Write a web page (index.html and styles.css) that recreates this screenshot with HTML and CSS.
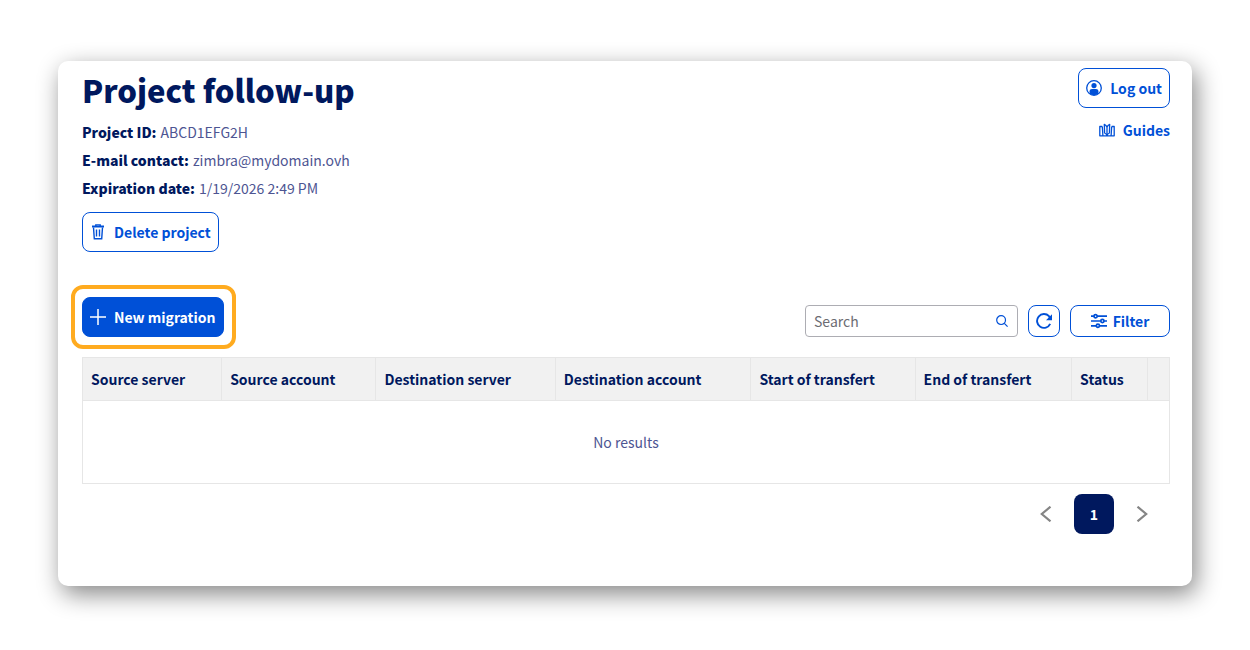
FILE: index.html
```html
<!DOCTYPE html>
<html lang="en">
<head>
<meta charset="utf-8">
<meta name="viewport" content="width=device-width, initial-scale=1">
<title>Project follow-up</title>
<link rel="stylesheet" href="styles.css">
</head>
<body>
<main class="card">
  <header class="top">
    <div class="project">
      <h1 class="title">Project follow-up</h1>
      <dl class="facts">
        <div class="fact"><dt>Project ID:</dt> <dd>ABCD1EFG2H</dd></div>
        <div class="fact"><dt>E-mail contact:</dt> <dd>zimbra@mydomain.ovh</dd></div>
        <div class="fact"><dt>Expiration date:</dt> <dd>1/19/2026 2:49 PM</dd></div>
      </dl>
      <button type="button" class="btn">
        <svg class="icon" viewBox="0 0 16 16" fill="none" stroke="currentColor" stroke-width="1.400"><path d="M2 2.500h12" stroke-width="2"/><path d="M5.800 2V.9h4.400V2M3.500 3.500l.8 11.300h7.400l.8-11.300M6.500 5.500v7M9.500 5.500v7"/></svg>
        <span>Delete project</span>
      </button>
    </div>
    <div class="account">
      <button type="button" class="btn">
        <svg class="icon" viewBox="0 0 16 16"><circle cx="8" cy="8" r="7.300" fill="none" stroke="currentColor" stroke-width="1.300"/><circle cx="8" cy="5.600" r="2.600" fill="currentColor"/><path fill="currentColor" d="M3.600 13.400v-2.100C3.600 9.900 4.700 9 6 9h4c1.300 0 2.400.9 2.400 2.300v2.100C11.200 14.500 9.700 15 8 15s-3.200-.5-4.400-1.600z"/></svg>
        <span>Log out</span>
      </button>
      <a class="guides" href="#guides">
        <svg class="icon" viewBox="0 0 16 16" fill="none" stroke="currentColor" stroke-width="1.300" stroke-linejoin="round"><path d="M3.300 4.500H.8v9.300h14.400V4.500h-2.500M8 13.600V5.300M8 5.300C7.500 3.800 6.600 2.800 5.300 2.300l.3 8.700C6.800 11.500 7.500 12.300 8 13.600 8.500 12.300 9.200 11.500 10.400 11l.3-8.700C9.400 2.800 8.500 3.800 8 5.300M3.300 4.500l.6 9.300M12.700 4.500l-.6 9.300"/></svg>
        <span>Guides</span>
      </a>
    </div>
  </header>

  <div class="toolbar">
    <div class="highlight">
      <button type="button" class="btn btn-primary">
        <svg class="icon" viewBox="0 0 16 16" fill="none" stroke="currentColor" stroke-width="1.500"><path d="M8 0v16M0 8h16"/></svg>
        <span>New migration</span>
      </button>
    </div>
    <div class="tools">
      <label class="search">
        <input type="search" placeholder="Search" aria-label="Search">
        <svg class="icon-small" viewBox="0 0 12 12" fill="none" stroke="currentColor" stroke-width="1.200"><circle cx="5.100" cy="5.100" r="4.400"/><path d="M8.300 8.300l3.300 3.300"/></svg>
      </label>
      <button type="button" class="btn btn-tool btn-square" aria-label="Refresh">
        <svg class="icon" viewBox="0 0 16 16"><path d="M14.200 10.900A6.900 6.900 0 1 1 13 3.200L14 5" fill="none" stroke="currentColor" stroke-width="1.900"/><path d="M16 1.200v6h-6z" fill="currentColor"/></svg>
      </button>
      <button type="button" class="btn btn-tool btn-filter">
        <svg class="icon" viewBox="0 0 16 16" fill="none" stroke="currentColor" stroke-width="1.700"><path d="M0 3.200h3M6.200 3.200H16M0 8h9.800M13 8h3M0 12.800h5.300M8.500 12.800H16"/><circle cx="4.600" cy="3.200" r="1.600"/><circle cx="11.400" cy="8" r="1.600"/><circle cx="6.900" cy="12.800" r="1.600"/></svg>
        <span>Filter</span>
      </button>
    </div>
  </div>

  <table class="grid">
    <thead>
      <tr>
        <th class="w-source">Source server</th>
        <th class="w-account">Source account</th>
        <th class="w-dest">Destination server</th>
        <th class="w-dest-account">Destination account</th>
        <th class="w-start">Start of transfert</th>
        <th class="w-end">End of transfert</th>
        <th class="w-status">Status</th>
        <td class="w-menu"></td>
      </tr>
    </thead>
    <tbody>
      <tr><td class="empty" colspan="8">No results</td></tr>
    </tbody>
  </table>

  <nav class="pager" aria-label="Pagination">
    <button type="button" class="page" aria-label="Previous page"><svg class="icon" viewBox="0 0 16 16" fill="none" stroke="currentColor" stroke-width="2.200"><path d="M12.500.7L3.800 8l8.700 7.300"/></svg></button>
    <button type="button" class="page page-current" aria-current="page">1</button>
    <button type="button" class="page" aria-label="Next page"><svg class="icon" viewBox="0 0 16 16" fill="none" stroke="currentColor" stroke-width="2.200"><path d="M3.500.7L12.200 8l-8.700 7.300"/></svg></button>
  </nav>
</main>
</body>
</html>
```
FILE: styles.css
```css
:root {
  --blue: #0050d7;
  --navy: #00185e;
  --text: #4d5592;
  --line: #e6e6e6;
}

* {
  box-sizing: border-box;
}

body {
  margin: 0;
  padding: 61px 58px 64px;
  background: #fff;
  color: var(--text);
  font: 14px/20px "Noto Sans CJK SC", "Noto Sans", sans-serif;
}

button,
input {
  font: inherit;
}

.card {
  padding: 7px 22px 52px 24px;
  border-radius: 10px;
  background: #fff;
  box-shadow: 4px 8px 24px rgba(0, 0, 0, 0.48);
}

.top {
  display: flex;
  justify-content: space-between;
}

.title {
  margin: 0;
  color: var(--navy);
  font-size: 31px;
  font-weight: 900;
  line-height: 44px;
}

.facts {
  display: grid;
  gap: 8px;
  margin: 10px 0 14px;
}

.fact {
  display: flex;
  gap: 4px;
}

.fact dt {
  color: var(--navy);
  font-weight: 900;
}

.fact dd {
  margin: 0;
}

.account {
  display: flex;
  flex-direction: column;
  align-items: flex-end;
  gap: 12px;
}

.btn {
  display: inline-flex;
  align-items: center;
  justify-content: center;
  gap: 8px;
  height: 40px;
  padding: 0 7px;
  border: 1px solid var(--blue);
  border-radius: 8px;
  background: #fff;
  color: var(--blue);
  font-weight: 700;
  white-space: nowrap;
}

.icon {
  flex: none;
  width: 16px;
  height: 16px;
}

.icon-small {
  flex: none;
  width: 12px;
  height: 12px;
}

.btn-primary {
  background: var(--blue);
  color: #fff;
}

.guides {
  display: flex;
  align-items: center;
  gap: 8px;
  color: var(--blue);
  font-weight: 700;
  text-decoration: none;
}

.toolbar {
  display: flex;
  align-items: flex-end;
  justify-content: space-between;
  margin-top: 33px;
}

.highlight {
  display: flex;
  margin-left: -11px;
  padding: 8px;
  padding-left: 7px;
  border: 4px solid #ffab1f;
  border-radius: 12px;
}

.tools {
  display: flex;
  gap: 10px;
  padding-bottom: 12px;
}

.search {
  display: flex;
  align-items: center;
  width: 213px;
  height: 32px;
  padding: 0 9px 0 8px;
  border: 1px solid #adadb3;
  border-radius: 4px;
  color: var(--blue);
}

.search input {
  flex: 1;
  min-width: 0;
  padding: 0;
  border: 0;
  outline: 0;
  background: transparent;
}

.search input::placeholder {
  color: #6c6c72;
}

.btn-tool {
  height: 32px;
  gap: 6px;
}

.btn-square {
  width: 32px;
}

.btn-filter {
  width: 100px;
}

.grid {
  width: 100%;
  margin-top: 8px;
  border-collapse: collapse;
  table-layout: fixed;
}

.grid th,
.grid td {
  height: 43px;
  padding: 0 8px;
  border: 1px solid var(--line);
}

.grid thead {
  background: #f1f1f1;
}

.grid th {
  color: var(--navy);
  font-weight: 700;
  text-align: left;
  white-space: nowrap;
}

.grid .w-source { width: 12.8%; }
.grid .w-account { width: 14.2%; }
.grid .w-dest { width: 16.5%; }
.grid .w-dest-account { width: 18%; }
.grid .w-start { width: 15.1%; }
.grid .w-end { width: 14.4%; }
.grid .w-status { width: 7%; }
.grid .w-menu { width: 2%; }

.grid .empty {
  height: 83px;
  text-align: center;
}

.pager {
  display: flex;
  justify-content: flex-end;
  gap: 8px;
  margin-top: 10px;
  padding-right: 8px;
}

.page {
  display: flex;
  align-items: center;
  justify-content: center;
  width: 40px;
  height: 40px;
  padding: 0;
  border: 0;
  border-radius: 8px;
  background: transparent;
  color: #858585;
}

.page-current {
  background: var(--navy);
  color: #fff;
  font-weight: 700;
}
```
